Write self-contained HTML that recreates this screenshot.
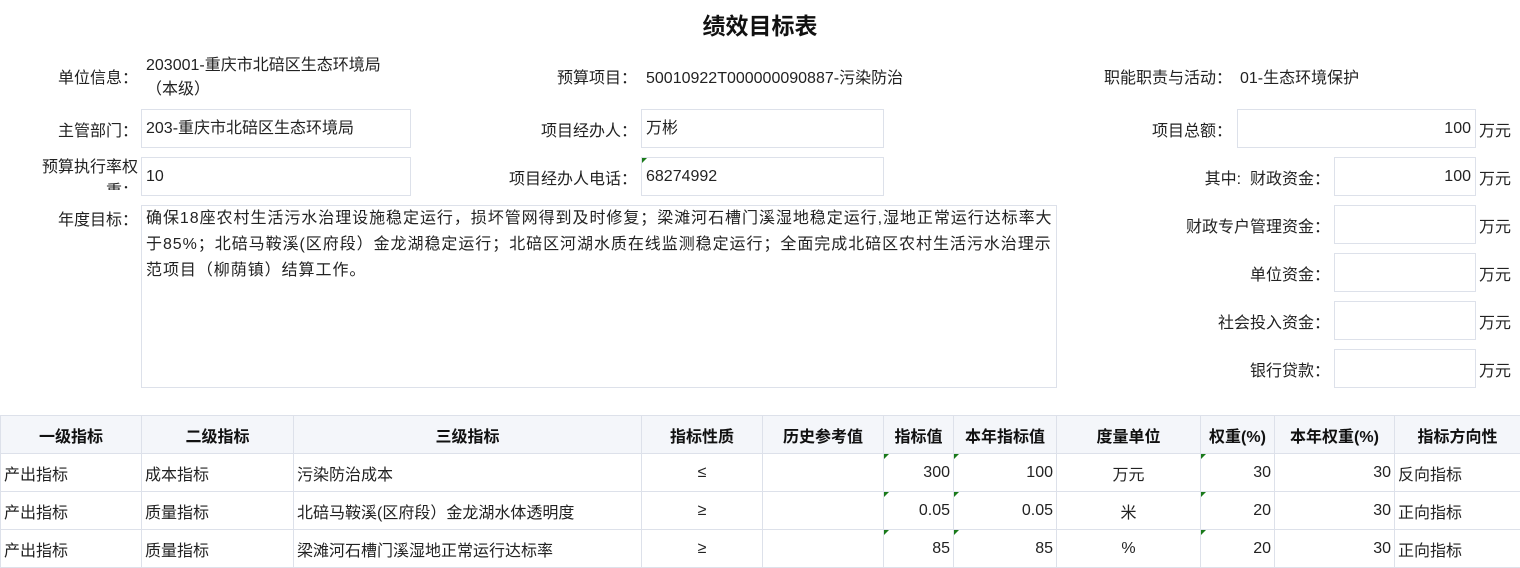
<!DOCTYPE html><html><head><meta charset="utf-8"><style>
body{margin:0;width:1520px;height:567px;background:#fff;position:relative;overflow:hidden;font-family:"Liberation Sans","Noto Sans CJK SC",sans-serif;font-size:16px;color:#222}
.a{position:absolute;white-space:nowrap}
.r{text-align:right}
.box{position:absolute;border:1px solid #dde1ea;box-sizing:border-box;padding:0 4px;line-height:37px;background:#fff}
table{position:absolute;left:0;top:415px;border-collapse:collapse;table-layout:fixed;width:1520px}
td,th{border:1px solid #dde1ea;height:37px;padding:0 3px;font-size:16px;white-space:nowrap;overflow:hidden;position:relative}
th{background:#f4f6fa;font-weight:bold;color:#111}
.g::before{content:"";position:absolute;left:0;top:0;border-top:5px solid #1a7a1a;border-right:5px solid transparent}
</style></head><body>
<div class="a" style="left:0;width:1520px;text-align:center;top:7px;font-size:23px;font-weight:bold;color:#111">绩效目标表</div>
<div class="a r" style="right:1382px;top:64px">单位信息：</div>
<div class="a" style="left:146px;top:54px;line-height:24px">203001-重庆市北碚区生态环境局<br>（本级）</div>
<div class="a r" style="right:883px;top:64px">预算项目：</div>
<div class="a" style="left:646px;top:64px">50010922T000000090887-污染防治</div>
<div class="a r" style="right:288px;top:64px">职能职责与活动：</div>
<div class="a" style="left:1240px;top:64px">01-生态环境保护</div>

<div class="a r" style="right:1382px;top:117px">主管部门：</div>
<div class="box" style="left:141px;top:109px;width:270px;height:39px">203-重庆市北碚区生态环境局</div>
<div class="a r" style="right:883px;top:117px">项目经办人：</div>
<div class="box" style="left:641px;top:109px;width:243px;height:39px">万彬</div>
<div class="a r" style="right:288px;top:117px">项目总额：</div>
<div class="box r" style="left:1237px;top:109px;width:239px;height:39px">100</div>
<div class="a" style="left:1479px;top:117px">万元</div>

<div class="a r" style="right:1382px;top:156px;line-height:24px;height:34px;overflow:hidden">预算执行率权<br>重：</div>
<div class="box" style="left:141px;top:157px;width:270px;height:39px">10</div>
<div class="a r" style="right:883px;top:165px">项目经办人电话：</div>
<div class="box g" style="left:641px;top:157px;width:243px;height:39px">68274992</div>
<div class="a r" style="right:190px;top:165px">其中:&nbsp; 财政资金：</div>
<div class="box r" style="left:1334px;top:157px;width:142px;height:39px">100</div>
<div class="a" style="left:1479px;top:165px">万元</div>

<div class="a r" style="right:1382px;top:206px">年度目标：</div>
<div class="box" style="left:141px;top:205px;width:916px;height:183px;white-space:nowrap;line-height:26px;padding:0 4px;letter-spacing:0.95px">确保18座农村生活污水治理设施稳定运行，损坏管网得到及时修复；梁滩河石槽门溪湿地稳定运行,湿地正常运行达标率大<br>于85%；北碚马鞍溪(区府段）金龙湖稳定运行；北碚区河湖水质在线监测稳定运行；全面完成北碚区农村生活污水治理示<br>范项目（柳荫镇）结算工作。</div>

<div class="a r" style="right:190px;top:213px">财政专户管理资金：</div>
<div class="box" style="left:1334px;top:205px;width:142px;height:39px"></div>
<div class="a" style="left:1479px;top:213px">万元</div>
<div class="a r" style="right:190px;top:261px">单位资金：</div>
<div class="box" style="left:1334px;top:253px;width:142px;height:39px"></div>
<div class="a" style="left:1479px;top:261px">万元</div>
<div class="a r" style="right:190px;top:309px">社会投入资金：</div>
<div class="box" style="left:1334px;top:301px;width:142px;height:39px"></div>
<div class="a" style="left:1479px;top:309px">万元</div>
<div class="a r" style="right:190px;top:357px">银行贷款：</div>
<div class="box" style="left:1334px;top:349px;width:142px;height:39px"></div>
<div class="a" style="left:1479px;top:357px">万元</div>

<table>
<colgroup><col style="width:141px"><col style="width:152px"><col style="width:348px"><col style="width:121px"><col style="width:121px"><col style="width:70px"><col style="width:103px"><col style="width:144px"><col style="width:74px"><col style="width:120px"><col style="width:126px"></colgroup>
<tr><th>一级指标</th><th>二级指标</th><th>三级指标</th><th>指标性质</th><th>历史参考值</th><th>指标值</th><th>本年指标值</th><th>度量单位</th><th>权重(%)</th><th>本年权重(%)</th><th>指标方向性</th></tr>
<tr><td>产出指标</td><td>成本指标</td><td>污染防治成本</td><td style="text-align:center">≤</td><td></td><td class="g r">300</td><td class="g r">100</td><td style="text-align:center">万元</td><td class="g r">30</td><td class="r">30</td><td>反向指标</td></tr>
<tr><td>产出指标</td><td>质量指标</td><td>北碚马鞍溪(区府段）金龙湖水体透明度</td><td style="text-align:center">≥</td><td></td><td class="g r">0.05</td><td class="g r">0.05</td><td style="text-align:center">米</td><td class="g r">20</td><td class="r">30</td><td>正向指标</td></tr>
<tr><td>产出指标</td><td>质量指标</td><td>梁滩河石槽门溪湿地正常运行达标率</td><td style="text-align:center">≥</td><td></td><td class="g r">85</td><td class="g r">85</td><td style="text-align:center">%</td><td class="g r">20</td><td class="r">30</td><td>正向指标</td></tr>
</table>
</body></html>
